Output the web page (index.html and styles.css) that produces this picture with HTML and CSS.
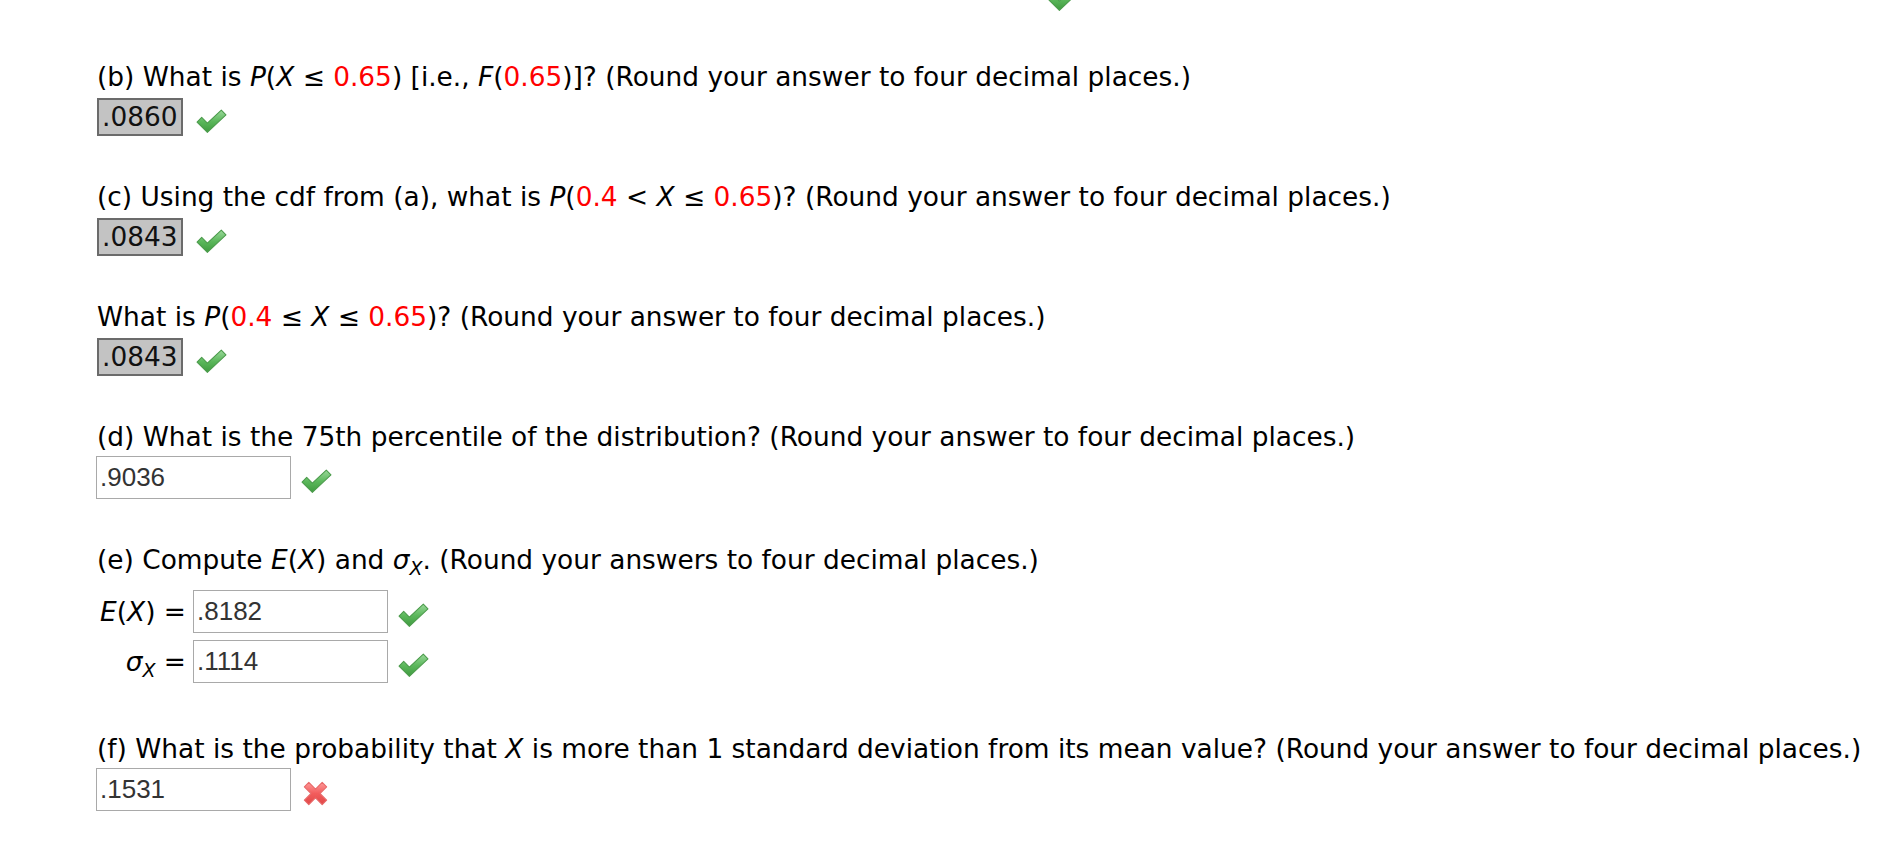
FILE: index.html
```html
<!DOCTYPE html>
<html>
<head>
<meta charset="utf-8">
<link rel="stylesheet" href="styles.css">
</head>
<body>
<svg width="0" height="0" class="defs">
  <defs>
    <linearGradient id="gck" x1="0" y1="0" x2="0" y2="1">
      <stop offset="0" stop-color="#9ad89a"/>
      <stop offset="0.5" stop-color="#5cb85c"/>
      <stop offset="1" stop-color="#3f9a3f"/>
    </linearGradient>
    <linearGradient id="gx" x1="0" y1="0" x2="0" y2="1">
      <stop offset="0" stop-color="#ff9a9a"/>
      <stop offset="0.5" stop-color="#f25c5c"/>
      <stop offset="1" stop-color="#e04848"/>
    </linearGradient>
    <symbol id="check" viewBox="0 0 30 23">
      <path d="M1 12.5 L5.5 8 L11 13.5 L24.5 1 L29 5.5 L11 22.5 Z" fill="url(#gck)" stroke="#4a9a4a" stroke-width="1" stroke-linejoin="round"/>
    </symbol>
    <symbol id="cross" viewBox="0 0 26 26">
      <path d="M3 7 L7 3 L13 9 L19 3 L23 7 L17 13 L23 19 L19 23 L13 17 L7 23 L3 19 L9 13 Z" fill="url(#gx)" stroke="#e86a6a" stroke-width="1" stroke-linejoin="round"/>
    </symbol>
  </defs>
</svg>
<div class="page">
  <div class="prev"><svg class="icon-check" width="31" height="24"><use href="#check"/></svg></div>

  <div class="part first">
    <p class="q">(b) What is <i>P</i>(<i>X</i> ≤ <span class="red">0.65</span>) [i.e., <i>F</i>(<span class="red">0.65</span>)]? (Round your answer to four decimal places.)</p>
    <div class="ans">
      <span class="box-done">.0860</span>
      <svg class="icon-check" width="31" height="24"><use href="#check"/></svg>
    </div>
  </div>

  <div class="part">
    <p class="q">(c) Using the cdf from (a), what is <i>P</i>(<span class="red">0.4</span> &lt; <i>X</i> ≤ <span class="red">0.65</span>)? (Round your answer to four decimal places.)</p>
    <div class="ans">
      <span class="box-done">.0843</span>
      <svg class="icon-check" width="31" height="24"><use href="#check"/></svg>
    </div>
  </div>

  <div class="part">
    <p class="q">What is <i>P</i>(<span class="red">0.4</span> ≤ <i>X</i> ≤ <span class="red">0.65</span>)? (Round your answer to four decimal places.)</p>
    <div class="ans">
      <span class="box-done">.0843</span>
      <svg class="icon-check" width="31" height="24"><use href="#check"/></svg>
    </div>
  </div>

  <div class="part">
    <p class="q">(d) What is the 75th percentile of the distribution? (Round your answer to four decimal places.)</p>
    <div class="ans ans-field">
      <span class="field">.9036</span>
      <svg class="icon-check" width="31" height="24"><use href="#check"/></svg>
    </div>
  </div>

  <div class="part">
    <p class="q">(e) Compute <i>E</i>(<i>X</i>) and <i>σ</i><sub><i>X</i></sub>. (Round your answers to four decimal places.)</p>
    <div class="grid">
      <span class="lbl"><i>E</i>(<i>X</i>) =</span>
      <span class="field">.8182</span>
      <svg class="icon-check" width="31" height="24"><use href="#check"/></svg>
      <span class="lbl"><i>σ</i><sub><i>X</i></sub> =</span>
      <span class="field">.1114</span>
      <svg class="icon-check" width="31" height="24"><use href="#check"/></svg>
    </div>
  </div>

  <div class="part last">
    <p class="q">(f) What is the probability that <i>X</i> is more than 1 standard deviation from its mean value? (Round your answer to four decimal places.)</p>
    <div class="ans ans-field">
      <span class="field">.1531</span>
      <svg class="icon-cross" width="29" height="29"><use href="#cross"/></svg>
    </div>
  </div>
</div>
</body>
</html>
```

FILE: styles.css
```css
html, body {
  margin: 0;
  padding: 0;
  background: #ffffff;
}

body {
  font-family: "DejaVu Sans", Verdana, sans-serif;
  font-size: 26.4px;
  color: #000000;
}

.defs {
  position: absolute;
  width: 0;
  height: 0;
}

.page {
  padding-left: 97px;
}

.prev {
  height: 11px;
  overflow: hidden;
  padding-left: 951px;
}

.prev .icon-check {
  display: block;
  margin-top: -13px;
}

.part {
  margin-top: 46px;
}

.part.first {
  margin-top: 51px;
}

.part.last {
  margin-top: 51px;
}

.q {
  margin: 0;
  line-height: 30px;
  white-space: nowrap;
}

.red {
  color: #ff0000;
}

sub {
  font-size: 0.72em;
  vertical-align: -0.3em;
  line-height: 0;
}

.ans {
  display: flex;
  align-items: center;
  margin-top: 6px;
}

.ans-field {
  margin-top: 4px;
  margin-left: -1px;
}

.box-done {
  box-sizing: border-box;
  width: 86px;
  height: 38px;
  line-height: 34px;
  padding-left: 3px;
  border: 2px solid #6b6b6b;
  background: #c3c3c3;
  color: #111111;
  margin-right: 13px;
}

.field {
  box-sizing: border-box;
  width: 195px;
  height: 43px;
  line-height: 41px;
  padding-left: 3px;
  border: 1px solid #a9a9a9;
  background: #ffffff;
  color: #333333;
  font-family: "Liberation Sans", Arial, sans-serif;
  font-size: 26px;
  margin-right: 10px;
}

.icon-check,
.icon-cross {
  display: block;
  margin-top: 7px;
}

.grid {
  display: grid;
  grid-template-columns: 89px 195px 31px;
  column-gap: 7px;
  row-gap: 7px;
  align-items: center;
  margin-top: 15px;
}

.grid .field {
  margin-right: 0;
}

.grid .icon-check {
  margin-left: 3px;
}

.lbl {
  text-align: right;
  white-space: nowrap;
}
```
